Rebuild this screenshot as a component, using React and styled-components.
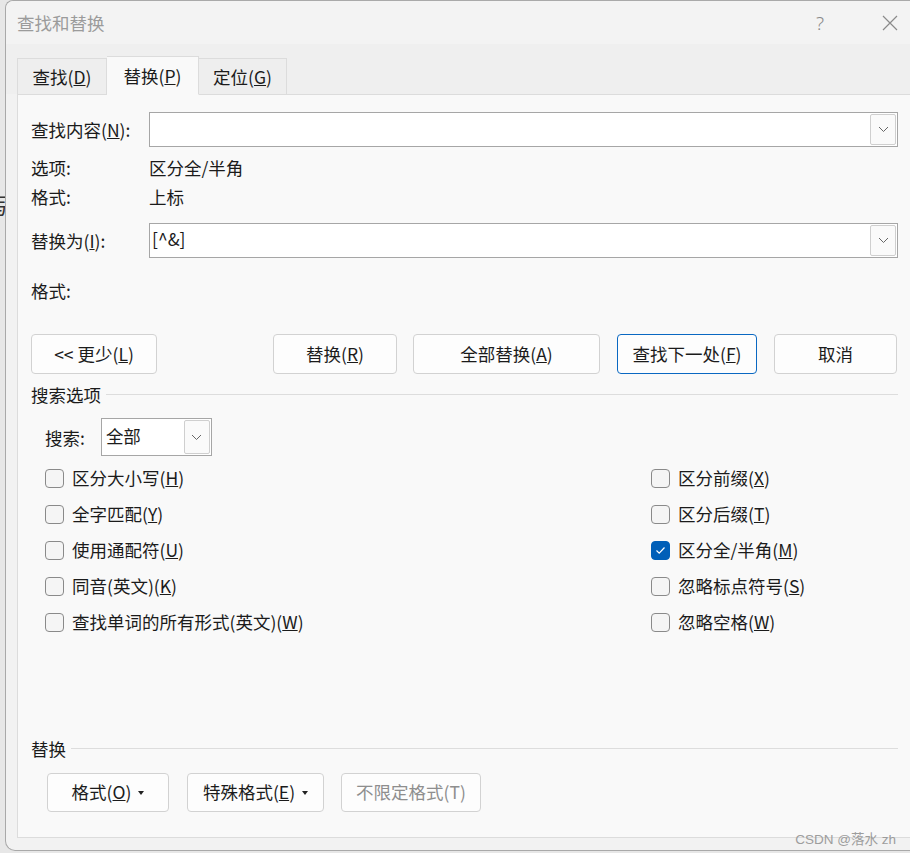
import React from 'react'
import styled, { createGlobalStyle } from 'styled-components'

const Global = createGlobalStyle`
  html, body { margin: 0; padding: 0; }
  body {
    background: #e7e7e7;
    font-family: "Noto Sans CJK SC", "Noto Sans", sans-serif;
    color: #1b1b1b;
  }
`

const Page = styled.div`
  display: flex;
  width: 910px;
  height: 853px;
  overflow: hidden;
`

const Behind = styled.div`
  width: 5px;
  flex: none;
  overflow: hidden;
  padding-top: 188px;
  font-size: 22px;
  color: #333;
  white-space: nowrap;
  & > span { margin-left: -13px; display: inline-block; }
`

const Dialog = styled.div`
  position: relative;
  flex: 1;
  height: 851px;
  box-sizing: border-box;
  background: #f2f2f2;
  border: 1px solid #a9a9a9;
  border-right: none;
  border-radius: 8px 0 0 10px;
  display: flex;
  flex-direction: column;
`

const TitleBar = styled.div`
  height: 43px;
  display: flex;
  align-items: center;
  padding-left: 11px;
  background: #f3f3f3;
  border-radius: 8px 0 0 0;
`

const Title = styled.div`
  font-size: 17.5px;
  color: #9b9b9b;
  flex: 1;
`

const TitleBtn = styled.div`
  width: ${p => p.w}px;
  margin-left: ${p => p.ml || 0}px;
  display: flex;
  justify-content: center;
  align-items: center;
  color: #8a8a8a;
  font-size: 19px;
  font-family: "Noto Sans", sans-serif;
  font-weight: 300;
`

const TabStrip = styled.div`
  height: 50px;
  background: #efefef;
  display: flex;
  align-items: flex-end;
  padding-left: 11px;
  position: relative;
  z-index: 1;
`

const Tab = styled.div`
  width: ${p => p.w}px;
  height: ${p => (p.active ? 39 : 36)}px;
  box-sizing: border-box;
  display: flex;
  align-items: center;
  justify-content: center;
  font-size: 17.5px;
  background: ${p => (p.active ? '#f9f9f9' : '#eeeeee')};
  border: 1px solid #dcdcdc;
  border-bottom: ${p => (p.active ? '1px solid #f9f9f9' : 'none')};
  border-left: ${p => (p.noLeft ? 'none' : '1px solid #dcdcdc')};
  margin-bottom: ${p => (p.active ? -1 : 0)}px;
  color: #1b1b1b;
`

const Panel = styled.div`
  margin-left: 11px;
  height: 744px;
  box-sizing: border-box;
  background: #f9f9f9;
  border: 1px solid #dcdcdc;
  border-right: none;
  padding: 0 12px 0 13px;
  display: flex;
  flex-direction: column;
`

const FieldRow = styled.div`
  display: flex;
  align-items: center;
  margin-top: ${p => p.mt}px;
  height: 35px;
`

const Label = styled.div`
  width: 118px;
  flex: none;
  font-size: 17.5px;
  white-space: nowrap;
`

const Combo = styled.div`
  flex: 1;
  height: 35px;
  box-sizing: border-box;
  background: #ffffff;
  border: 1px solid #a6a6a6;
  display: flex;
  align-items: center;
  padding: 0 1px 0 2px;
  font-size: 17.5px;
`

const ComboText = styled.div`
  flex: 1;
  padding-bottom: 4px;
`

const DropBtn = styled.div`
  width: 26px;
  height: ${p => p.h || 31}px;
  box-sizing: border-box;
  border: 1px solid #cfcfcf;
  border-radius: 2px;
  background: #fafafa;
  display: flex;
  align-items: center;
  justify-content: center;
`

const InfoRow = styled.div`
  display: flex;
  align-items: center;
  height: 29px;
  margin-top: ${p => p.mt || 0}px;
  font-size: 17.5px;
`

const ButtonRow = styled.div`
  display: flex;
  margin-top: ${p => p.mt}px;
  padding-left: ${p => p.pl || 0}px;
`

const Button = styled.div`
  width: ${p => p.w}px;
  height: ${p => p.h || 40}px;
  margin-left: ${p => p.ml || 0}px;
  box-sizing: border-box;
  background: #fdfdfd;
  border: 1px solid ${p => (p.primary ? '#0a68c2' : '#d2d2d2')};
  border-radius: 4px;
  display: flex;
  align-items: center;
  justify-content: center;
  gap: 7px;
  font-size: 17.5px;
  color: ${p => (p.disabled ? '#8e8e8e' : '#1b1b1b')};
  padding-bottom: 2px;
`

const Section = styled.div`
  display: flex;
  align-items: center;
  height: 20px;
  margin-top: ${p => p.mt}px;
  font-size: 17.5px;
  gap: 5px;
  &::after {
    content: "";
    flex: 1;
    border-top: 1px solid #dddddd;
  }
`

const SearchRow = styled.div`
  display: flex;
  align-items: center;
  margin-top: 14px;
  padding-left: 14px;
  font-size: 17.5px;
  height: 38px;
`

const Select = styled.div`
  width: 111px;
  height: 38px;
  margin-left: 16px;
  box-sizing: border-box;
  border: 1px solid #a6a6a6;
  background: #ffffff;
  display: flex;
  align-items: center;
  padding: 0 1px 0 4px;
  & > span { flex: 1; padding-bottom: 3px; }
`

const CheckGrid = styled.div`
  display: grid;
  grid-template-columns: 606px 1fr;
  grid-auto-flow: column;
  grid-template-rows: repeat(5, 36px);
  margin-top: 4px;
  padding-left: 14px;
`

const CheckItem = styled.div`
  display: flex;
  align-items: center;
  gap: 8px;
  font-size: 17.5px;
  & > span { padding-bottom: 2px; }
`

const Box = styled.div`
  width: 19px;
  height: 19px;
  box-sizing: border-box;
  border-radius: 4px;
  border: 1px solid ${p => (p.checked ? '#005fb8' : '#8a8a8a')};
  background: ${p => (p.checked ? '#005fb8' : '#f5f5f5')};
  display: flex;
  align-items: center;
  justify-content: center;
`

const Caret = styled.span`
  width: 0;
  height: 0;
  border-left: 3.5px solid transparent;
  border-right: 3.5px solid transparent;
  border-top: 4px solid #222;
  margin-top: 2px;
`

const Watermark = styled.div`
  position: absolute;
  right: 14px;
  bottom: 2px;
  font-family: "Liberation Sans", "Noto Sans CJK SC", sans-serif;
  font-size: 13.5px;
  color: #9d9d9d;
`

const Chevron = () => (
  <svg width="11" height="7" viewBox="0 0 11 7">
    <polyline points="1,1 5.5,5.5 10,1" fill="none" stroke="#666" strokeWidth="1" />
  </svg>
)

const Check = () => (
  <svg width="11" height="9" viewBox="0 0 11 9">
    <polyline points="1.5,4.5 4.2,7.2 9.5,1.5" fill="none" stroke="#fff" strokeWidth="1.2" />
  </svg>
)

const Close = () => (
  <svg width="16" height="16" viewBox="0 0 16 16">
    <path d="M1 1 L15 15 M15 1 L1 15" stroke="#8a8a8a" strokeWidth="1.2" />
  </svg>
)

const left = [
  ['区分大小写(', 'H', ')'],
  ['全字匹配(', 'Y', ')'],
  ['使用通配符(', 'U', ')'],
  ['同音(英文)(', 'K', ')'],
  ['查找单词的所有形式(英文)(', 'W', ')'],
]

const right = [
  ['区分前缀(', 'X', ')', false],
  ['区分后缀(', 'T', ')', false],
  ['区分全/半角(', 'M', ')', true],
  ['忽略标点符号(', 'S', ')', false],
  ['忽略空格(', 'W', ')', false],
]

export default function App() {
  return (
    <Page>
      <Global />
      <Behind><span>写</span></Behind>
      <Dialog>
        <TitleBar>
          <Title>查找和替换</Title>
          <TitleBtn w={30}>?</TitleBtn>
          <TitleBtn w={40} ml={35}><Close /></TitleBtn>
        </TitleBar>
        <TabStrip>
          <Tab w={90}>查找(<u>D</u>)</Tab>
          <Tab w={92} active noLeft>替换(<u>P</u>)</Tab>
          <Tab w={88} noLeft>定位(<u>G</u>)</Tab>
        </TabStrip>
        <Panel>
          <FieldRow mt={17}>
            <Label>查找内容(<u>N</u>):</Label>
            <Combo>
              <ComboText></ComboText>
              <DropBtn><Chevron /></DropBtn>
            </Combo>
          </FieldRow>
          <InfoRow mt={6}><Label>选项:</Label>区分全/半角</InfoRow>
          <InfoRow><Label>格式:</Label>上标</InfoRow>
          <FieldRow mt={12}>
            <Label>替换为(<u>I</u>):</Label>
            <Combo>
              <ComboText>[^&amp;]</ComboText>
              <DropBtn><Chevron /></DropBtn>
            </Combo>
          </FieldRow>
          <InfoRow mt={18}><Label>格式:</Label></InfoRow>
          <ButtonRow mt={29}>
            <Button w={126}><span>&lt;&lt; 更少(<u>L</u>)</span></Button>
            <Button w={124} ml={116}><span>替换(<u>R</u>)</span></Button>
            <Button w={187} ml={16}><span>全部替换(<u>A</u>)</span></Button>
            <Button w={140} ml={17} primary><span>查找下一处(<u>F</u>)</span></Button>
            <Button w={123} ml={17}><span>取消</span></Button>
          </ButtonRow>
          <Section mt={10}>搜索选项</Section>
          <SearchRow>
            搜索:
            <Select>
              <span>全部</span>
              <DropBtn h={34}><Chevron /></DropBtn>
            </Select>
          </SearchRow>
          <CheckGrid>
            {left.map((c, i) => (
              <CheckItem key={`l-${i}`}>
                <Box />
                <span>{c[0]}<u>{c[1]}</u>{c[2]}</span>
              </CheckItem>
            ))}
            {right.map((c, i) => (
              <CheckItem key={`r-${i}`}>
                <Box checked={c[3]}>{c[3] && <Check />}</Box>
                <span>{c[0]}<u>{c[1]}</u>{c[2]}</span>
              </CheckItem>
            ))}
          </CheckGrid>
          <Section mt={98}>替换</Section>
          <ButtonRow mt={15} pl={16}>
            <Button w={122} h={39}><span>格式(<u>O</u>)</span><Caret /></Button>
            <Button w={137} h={39} ml={18}><span>特殊格式(<u>E</u>)</span><Caret /></Button>
            <Button w={140} h={39} ml={17} disabled><span>不限定格式(T)</span></Button>
          </ButtonRow>
        </Panel>
        <Watermark>CSDN @落水 zh</Watermark>
      </Dialog>
    </Page>
  )
}
